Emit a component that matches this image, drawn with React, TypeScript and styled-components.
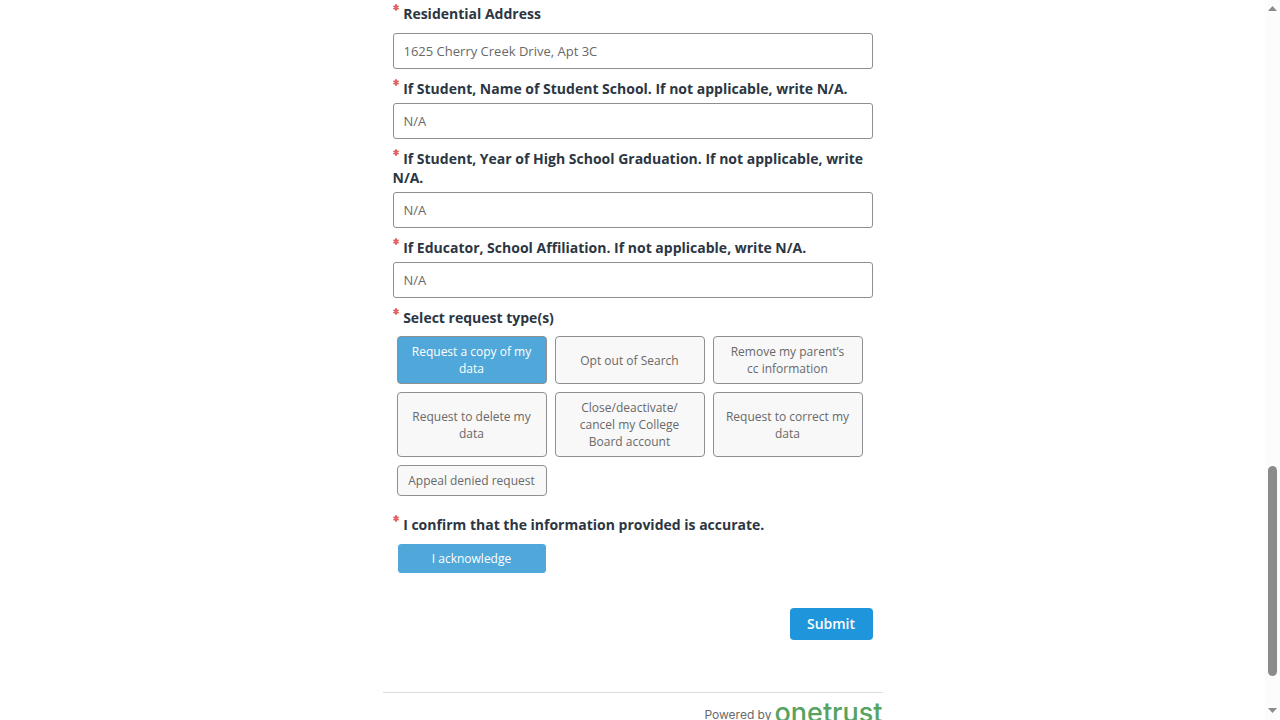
import { useState } from 'react';
import styled, { createGlobalStyle } from 'styled-components';

const GlobalStyle = createGlobalStyle`
  *, *::before, *::after { box-sizing: border-box; }
  body {
    margin: 0;
    background: #fff;
    color: #2c3643;
    font-family: 'Open Sans', 'Noto Sans', sans-serif;
    font-size: 14px;
  }
`;

const Viewport = styled.div`
  display: flex;
  height: 100vh;
  overflow: hidden;
`;

const Page = styled.main`
  flex: 1;
  min-width: 0;
`;

const Container = styled.div`
  width: 100%;
  max-width: 500px;
  margin: 0 auto;
`;

const Form = styled.form`
  display: flex;
  flex-direction: column;
  gap: 10px;
  padding: 4px 10px 52px;
`;

const Field = styled.div<{ $gap?: number }>`
  display: flex;
  flex-direction: column;
  gap: ${(p) => p.$gap ?? 5}px;
`;

const Label = styled.label`
  font-size: 14px;
  font-weight: 700;
  line-height: 19px;
`;

const StarIcon = styled.svg`
  width: 7px;
  height: 7px;
  vertical-align: 8px;
  stroke: #e0605d;
  stroke-width: 1.9;
`;

const TextInput = styled.input`
  width: 100%;
  height: 36px;
  padding: 0 10px;
  border: 1px solid #8e8e93;
  border-radius: 3px;
  background: #fff;
  color: #696969;
  font-family: inherit;
  font-size: 13px;
`;

const Choices = styled.div`
  display: grid;
  grid-template-columns: repeat(auto-fill, 150px);
  gap: 8px;
  padding: 4px;
`;

const Choice = styled.button<{ $plain?: boolean }>`
  padding: 6px 10px;
  border: 1px solid ${(p) => (p.$plain ? '#fff' : '#8e8e93')};
  border-radius: 4px;
  background: #f8f8f8;
  color: #696969;
  font-family: inherit;
  font-size: 12px;
  line-height: 17px;
  text-align: center;
  cursor: pointer;

  &[aria-pressed='true'] {
    background: #50a7d9;
    color: #fff;
  }
`;

const ConfirmSection = styled.div`
  padding-top: 5px;
`;

const Actions = styled.div`
  display: flex;
  justify-content: flex-end;
  padding-top: 20px;
`;

const SubmitButton = styled.button`
  width: 83px;
  height: 32px;
  padding: 0 0 2px;
  border: 0;
  border-radius: 4px;
  background: #1f96db;
  color: #fff;
  font-family: inherit;
  font-size: 14px;
  font-weight: 600;
  cursor: pointer;
`;

const Footer = styled.footer`
  display: flex;
  justify-content: flex-end;
  align-items: flex-start;
  gap: 3px;
  padding-top: 4px;
  border-top: 1px solid #dcdcdc;
  color: #696969;
  font-family: Inter, sans-serif;
  font-size: 12px;
  line-height: 36px;
`;

const Brand = styled.a`
  color: #56a361;
  font-size: 27px;
  font-weight: 500;
  line-height: 32px;
  text-decoration: none;
`;

const ScrollTrack = styled.div`
  display: flex;
  flex-direction: column;
  align-items: center;
  width: 15px;
  padding: 6px 0 7px;
  background: #fcfcfc;
`;

const ScrollSpace = styled.div<{ $grow: number }>`
  flex: ${(p) => p.$grow} 1 0;
`;

const ScrollThumb = styled.div`
  flex: 210 1 0;
  width: 9px;
  border-radius: 5px;
  background: #8b8b8b;
`;

const Star = () => (
  <StarIcon viewBox="0 0 7 7" role="img" aria-label="Required">
    <path d="M3 0.3 V6.7 M0.4 2 L5.6 5 M5.6 2 L0.4 5" />
  </StarIcon>
);

const textFields = [
  { id: 'address', label: 'Residential Address', value: '1625 Cherry Creek Drive, Apt 3C', gap: 10 },
  { id: 'school', label: 'If Student, Name of Student School. If not applicable, write N/A.', value: 'N/A' },
  { id: 'graduation', label: 'If Student, Year of High School Graduation. If not applicable, write N/A.', value: 'N/A' },
  { id: 'affiliation', label: 'If Educator, School Affiliation. If not applicable, write N/A.', value: 'N/A' },
];

const requestTypes = [
  'Request a copy of my data',
  'Opt out of Search',
  'Remove my parent’s cc information',
  'Request to delete my data',
  'Close/deactivate/ cancel my College Board account',
  'Request to correct my data',
  'Appeal denied request',
];

export default function App() {
  const [selected, setSelected] = useState<string[]>([requestTypes[0]]);
  const [confirmed, setConfirmed] = useState(true);

  const toggle = (type: string) =>
    setSelected((list) => (list.includes(type) ? list.filter((t) => t !== type) : [...list, type]));

  return (
    <Viewport>
      <GlobalStyle />
      <Page>
        <Container>
          <Form onSubmit={(e) => e.preventDefault()}>
            {textFields.map((f) => (
              <Field key={f.id} $gap={f.gap}>
                <Label htmlFor={f.id}>
                  <Star /> {f.label}
                </Label>
                <TextInput id={f.id} type="text" defaultValue={f.value} required />
              </Field>
            ))}
            <Field role="group" aria-labelledby="types-label">
              <Label as="div" id="types-label">
                <Star /> Select request type(s)
              </Label>
              <Choices>
                {requestTypes.map((t) => (
                  <Choice key={t} type="button" aria-pressed={selected.includes(t)} onClick={() => toggle(t)}>
                    {t}
                  </Choice>
                ))}
              </Choices>
            </Field>
            <ConfirmSection>
              <Field role="group" aria-labelledby="confirm-label">
                <Label as="div" id="confirm-label">
                  <Star /> I confirm that the information provided is accurate.
                </Label>
                <Choices>
                  <Choice $plain type="button" aria-pressed={confirmed} onClick={() => setConfirmed(!confirmed)}>
                    I acknowledge
                  </Choice>
                </Choices>
              </Field>
            </ConfirmSection>
            <Actions>
              <SubmitButton type="submit">Submit</SubmitButton>
            </Actions>
          </Form>
          <Footer>
            <span>Powered by</span>
            <Brand href="#">onetrust</Brand>
          </Footer>
        </Container>
      </Page>
      <ScrollTrack aria-hidden="true">
        <svg width="9" height="5" viewBox="0 0 9 5">
          <path d="M4.5 0 L9 5 H0 Z" fill="#8b8b8b" />
        </svg>
        <ScrollSpace $grow={455} />
        <ScrollThumb />
        <ScrollSpace $grow={32} />
        <svg width="9" height="5" viewBox="0 0 9 5">
          <path d="M0 0 H9 L4.5 5 Z" fill="#8b8b8b" />
        </svg>
      </ScrollTrack>
    </Viewport>
  );
}
